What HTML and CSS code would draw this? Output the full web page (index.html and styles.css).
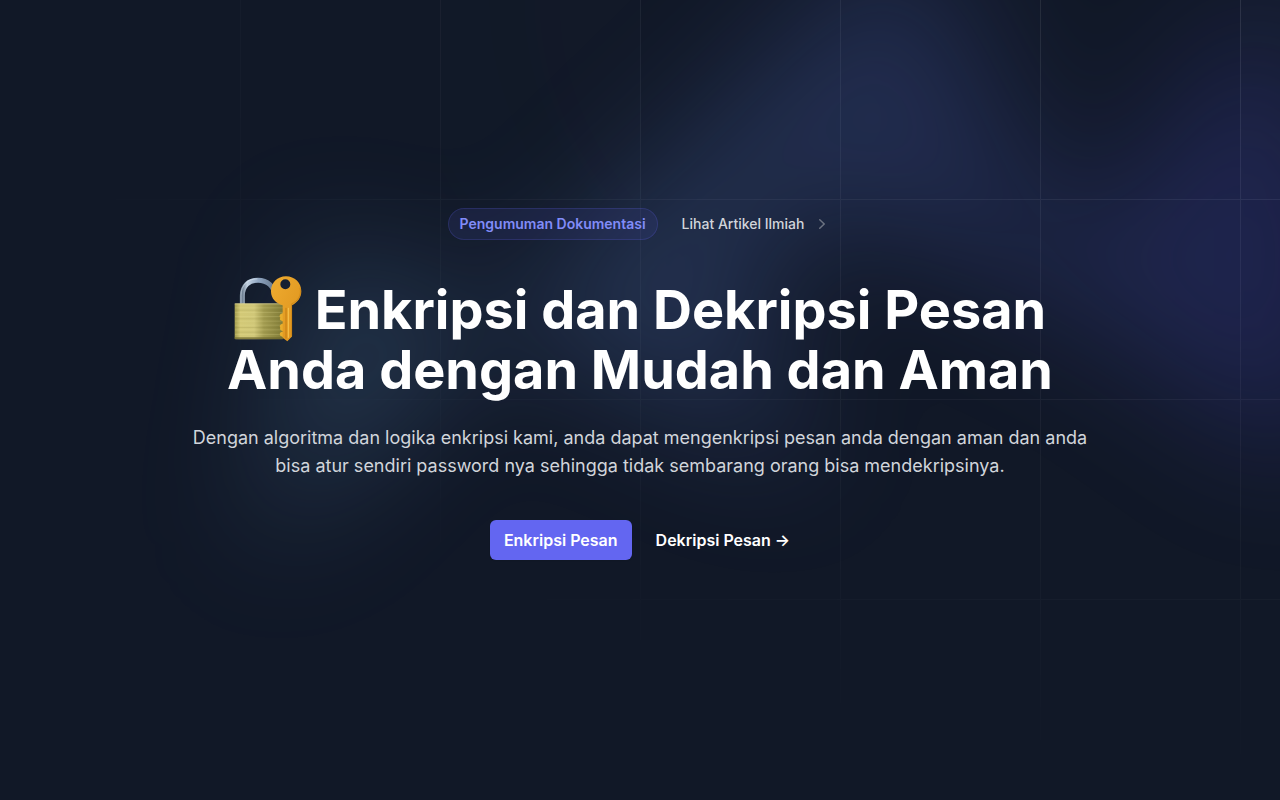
FILE: index.html
```
<!DOCTYPE html>
<html lang="id">
<head>
    <meta charset="UTF-8">
    <meta name="viewport" content="width=device-width, initial-scale=1.0">
    <title>Enkripsi dan Dekripsi Pesan</title>
    <link rel="stylesheet" href="styles.css">
</head>
<body>
    <main class="hero">
        <svg class="grid-pattern" aria-hidden="true">
            <defs>
                <pattern id="grid" width="200" height="200" x="50%" y="-1" patternUnits="userSpaceOnUse">
                    <path d="M.5 200V.5H200" fill="none" />
                </pattern>
            </defs>
            <svg class="grid-squares" x="50%" y="-1">
                <path d="M-200 0h201v201h-201Z M600 0h201v201h-201Z M-400 600h201v201h-201Z M200 800h201v201h-201Z" stroke-width="0" />
            </svg>
            <rect width="100%" height="100%" stroke-width="0" fill="url(#grid)" />
        </svg>
        <div class="glow" aria-hidden="true">
            <div class="glow-shape"></div>
        </div>

        <div class="content">
            <div class="announcement">
                <span class="badge">Pengumuman Dokumentasi</span>
                <a class="article-link" href="#artikel">
                    <span>Lihat Artikel Ilmiah</span>
                    <svg class="chevron" viewBox="0 0 20 20" fill="currentColor" aria-hidden="true">
                        <path fill-rule="evenodd" d="M7.21 14.77a.75.75 0 01.02-1.06L11.168 10 7.23 6.29a.75.75 0 111.04-1.08l4.5 4.25a.75.75 0 010 1.08l-4.5 4.25a.75.75 0 01-1.06-.02z" clip-rule="evenodd" />
                    </svg>
                </a>
            </div>
            <h1>
                <svg class="lock" viewBox="0 0 204 200" role="img" aria-label="Gembok dan kunci">
                    <defs>
                        <linearGradient id="brass" x1="0" x2="1" y1="0" y2="0">
                            <stop offset="0" stop-color="#a19a4c" />
                            <stop offset="0.12" stop-color="#d3c977" />
                            <stop offset="0.4" stop-color="#d0c778" />
                            <stop offset="0.6" stop-color="#a29b50" />
                            <stop offset="1" stop-color="#7f7a36" />
                        </linearGradient>
                        <linearGradient id="steel" x1="0" x2="1" y1="0" y2="0">
                            <stop offset="0" stop-color="#6f8093" />
                            <stop offset="0.15" stop-color="#c3d2e2" />
                            <stop offset="0.5" stop-color="#8fa5c0" />
                            <stop offset="1" stop-color="#66788d" />
                        </linearGradient>
                        <linearGradient id="gold" x1="0" x2="1" y1="0" y2="1">
                            <stop offset="0" stop-color="#eeab30" />
                            <stop offset="1" stop-color="#dd921b" />
                        </linearGradient>
                    </defs>
                    <path d="M25 88V62C25 32 44 15 72 15S122 34 122 62" fill="none" stroke="url(#steel)" stroke-width="15" />
                    <path d="M21 84V60C21 30 42 11 70 11" fill="none" stroke="#dce8f4" stroke-width="3" opacity="0.6" />
                    <rect x="2" y="85" width="146" height="107" rx="3" fill="url(#brass)" />
                    <path d="M3 98H147M3 112H147M3 124H147M3 138H147M3 150H147M3 164H147M3 178H147" stroke="#f2eba5" stroke-width="2" opacity="0.25" />
                    <path d="M3 105H147M3 131H147M3 157H147M3 171H147" stroke="#706a2b" stroke-width="2" opacity="0.2" />
                    <path d="M2 86H148" stroke="#e6dea0" stroke-width="2" />
                    <path d="M2 189H148" stroke="#6a642b" stroke-width="5" opacity="0.7" />
                    <path d="M148 114C139 114 134 121 139 128 136 132 137 137 148 138V146C137 146 136 154 139 158 136 163 141 167 148 168V170C137 170 136 176 139 182L148 186Z" fill="#e8ae2c" />
                    <path fill-rule="evenodd" d="M156 3C182 3 202 22 202 48 202 67 190 82 174 90V184L160 198 146 188V90C126 84 111 70 111 48 111 22 130 3 156 3ZM154 12A15 15 0 1 0 154 42 15 15 0 1 0 154 12Z" fill="url(#gold)" />
                    <path d="M156 98V190" stroke="#c57d12" stroke-width="3" />
                    <path d="M163 98V188" stroke="#f9c650" stroke-width="3" />
                    <path d="M198 38C204 62 190 78 173 86V182" fill="none" stroke="#bf7b12" stroke-width="3" opacity="0.6" />
                </svg>
                Enkripsi dan Dekripsi Pesan Anda dengan Mudah dan Aman
            </h1>
            <p>Dengan algoritma dan logika enkripsi kami, anda dapat mengenkripsi pesan anda dengan aman dan anda bisa atur sendiri password nya sehingga tidak sembarang orang bisa mendekripsinya.</p>
            <div class="actions">
                <a class="btn-primary" href="#enkripsi">Enkripsi Pesan</a>
                <a class="btn-text" href="#dekripsi">Dekripsi Pesan <span aria-hidden="true">→</span></a>
            </div>
        </div>
    </main>
</body>
</html>
```
FILE: styles.css
```
* {
    box-sizing: border-box;
}

body {
    margin: 0;
    background-color: #111827;
    color: white;
    font-family: Inter, sans-serif;
}

a {
    color: white;
    text-decoration: none;
}

.hero {
    position: relative;
    isolation: isolate;
    overflow: hidden;
    min-height: 100vh;
    display: flex;
    align-items: center;
    justify-content: center;
    padding: 32px 24px 64px;
}

/* Background grid, fades out from the top right corner */
.grid-pattern {
    position: absolute;
    inset: 0;
    z-index: -1;
    width: 100%;
    height: 100%;
    stroke: rgba(255, 255, 255, 0.1);
    -webkit-mask-image: radial-gradient(100% 100% at top right, white, transparent);
    mask-image: radial-gradient(100% 100% at top right, white, transparent);
}

.grid-squares {
    overflow: visible;
    fill: rgba(31, 41, 55, 0.2);
}

/* Blurred gradient blob */
.glow {
    position: absolute;
    top: calc(50% - 480px);
    left: calc(50% - 384px);
    z-index: -1;
    filter: blur(64px);
}

.glow-shape {
    width: 1108px;
    aspect-ratio: 1108 / 632;
    background: linear-gradient(to right, #80caff, #4f46e5);
    opacity: 0.2;
    clip-path: polygon(73.6% 51.7%, 91.7% 11.8%, 100% 46.4%, 97.4% 82.2%, 92.5% 84.9%, 75.7% 64%, 55.3% 47.5%, 46.5% 49.4%, 45% 62.9%, 50.3% 87.2%, 21.3% 64.1%, 0.1% 100%, 5.4% 51.1%, 21.4% 63.9%, 58.9% 0.2%, 73.6% 51.7%);
}

.content {
    max-width: 896px;
    text-align: center;
}

.announcement {
    display: flex;
    align-items: center;
    justify-content: center;
    gap: 24px;
    font-size: 14px;
    line-height: 24px;
}

.badge {
    padding: 4px 12px;
    border-radius: 16px;
    background-color: rgba(99, 102, 241, 0.1);
    box-shadow: inset 0 0 0 1px rgba(99, 102, 241, 0.2);
    color: #818cf8;
    font-weight: 600;
}

.article-link {
    display: flex;
    align-items: center;
    gap: 8px;
    color: #d1d5db;
    font-weight: 500;
}

.chevron {
    width: 20px;
    height: 20px;
    color: #6b7280;
}

h1 {
    margin: 40px 0 0;
    font-size: 54px;
    line-height: 60px;
    font-weight: 700;
}

.lock {
    width: 68px;
    height: 67px;
    margin: -8px 0;
    vertical-align: -5px;
}

p {
    margin: 24px 0 0;
    color: #d1d5db;
    font-size: 18px;
    line-height: 28px;
}

.actions {
    display: flex;
    align-items: center;
    justify-content: center;
    gap: 24px;
    margin-top: 40px;
    font-size: 16px;
    line-height: 24px;
    font-weight: 600;
}

.btn-primary {
    padding: 8px 14px;
    border-radius: 6px;
    background-color: #6366f1;
    box-shadow: 0 1px 2px rgba(0, 0, 0, 0.05);
}

.btn-primary:hover {
    background-color: #818cf8;
}
```
